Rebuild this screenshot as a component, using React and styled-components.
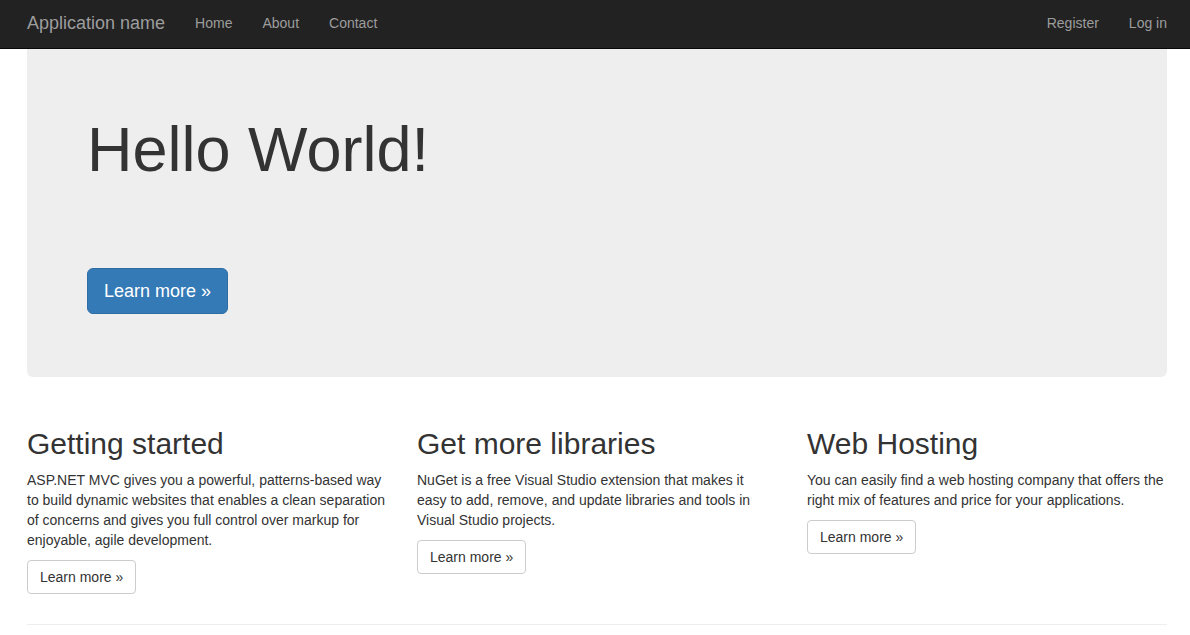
import styled, { createGlobalStyle } from 'styled-components';

const GlobalStyle = createGlobalStyle`
  html, body {
    margin: 0;
    padding: 0;
    background: #fff;
  }
  body {
    font-family: "Liberation Sans", Arial, Helvetica, sans-serif;
    font-size: 14px;
    line-height: 20px;
    color: #333;
  }
  * {
    box-sizing: border-box;
  }
`;

const features = [
  {
    title: 'Getting started',
    text: 'ASP.NET MVC gives you a powerful, patterns-based way to build dynamic websites that enables a clean separation of concerns and gives you full control over markup for enjoyable, agile development.',
  },
  {
    title: 'Get more libraries',
    text: 'NuGet is a free Visual Studio extension that makes it easy to add, remove, and update libraries and tools in Visual Studio projects.',
  },
  {
    title: 'Web Hosting',
    text: 'You can easily find a web hosting company that offers the right mix of features and price for your applications.',
  },
];

const App = () => {
  return (
    <>
      <GlobalStyle />
      <Navbar>
        <Container>
          <NavInner>
            <NavGroup>
              <Brand href="#">Application name</Brand>
              <NavLink href="#">Home</NavLink>
              <NavLink href="#">About</NavLink>
              <NavLink href="#">Contact</NavLink>
            </NavGroup>
            <NavGroup $right>
              <NavLink href="#">Register</NavLink>
              <NavLink href="#">Log in</NavLink>
            </NavGroup>
          </NavInner>
        </Container>
      </Navbar>
      <Container>
        <Jumbotron>
          <HeroTitle>Hello World!</HeroTitle>
          <HeroActions>
            <Button $primary $large href="#">
              Learn more &raquo;
            </Button>
          </HeroActions>
        </Jumbotron>
        <Row>
          {features.map((f) => (
            <Column key={f.title}>
              <ColumnTitle>{f.title}</ColumnTitle>
              <ColumnText>{f.text}</ColumnText>
              <ColumnActions>
                <Button href="#">Learn more &raquo;</Button>
              </ColumnActions>
            </Column>
          ))}
        </Row>
        <Divider />
      </Container>
    </>
  );
};

const Navbar = styled.nav`
  background-color: #222;
  border-bottom: 1px solid #080808;
  height: 49px;
`;

const Container = styled.div`
  padding: 0 23px 0 27px;
`;

const NavInner = styled.div`
  display: flex;
  justify-content: space-between;
  align-items: center;
  height: 46px;
`;

const NavGroup = styled.div`
  display: flex;
  align-items: center;
  margin-right: ${(p) => (p.$right ? '-15px' : '0')};
`;

const Brand = styled.a`
  font-size: 18px;
  line-height: 20px;
  color: #9d9d9d;
  text-decoration: none;
  padding-right: 15px;
`;

const NavLink = styled.a`
  font-size: 14px;
  line-height: 20px;
  color: #9d9d9d;
  text-decoration: none;
  padding: 0 15px;
`;

const Jumbotron = styled.div`
  background-color: #eee;
  border-radius: 0 0 6px 6px;
  padding: 48px 60px;
  margin-bottom: 30px;
`;

const HeroTitle = styled.h1`
  font-size: 63px;
  font-weight: 400;
  line-height: 1.1;
  color: #333;
  margin: 18px 0 84px;
`;

const HeroActions = styled.p`
  margin: 0 0 15px;
`;

const Button = styled.a`
  display: inline-block;
  text-decoration: none;
  border: 1px solid ${(p) => (p.$primary ? '#2e6da4' : '#ccc')};
  background-color: ${(p) => (p.$primary ? '#337ab7' : '#fff')};
  color: ${(p) => (p.$primary ? '#fff' : '#333')};
  font-size: ${(p) => (p.$large ? '18px' : '14px')};
  line-height: ${(p) => (p.$large ? '24px' : '20px')};
  padding: ${(p) => (p.$large ? '10px 16px' : '6px 12px')};
  border-radius: ${(p) => (p.$large ? '6px' : '4px')};
`;

const Row = styled.div`
  display: grid;
  grid-template-columns: repeat(3, 1fr);
  column-gap: 30px;
`;

const Column = styled.div`
  min-width: 0;
`;

const ColumnTitle = styled.h2`
  font-size: 30px;
  font-weight: 400;
  line-height: 33px;
  margin: 20px 0 10px;
  color: #333;
`;

const ColumnText = styled.p`
  margin: 0 0 10px;
`;

const ColumnActions = styled.p`
  margin: 0 0 10px;
`;

const Divider = styled.hr`
  border: 0;
  border-top: 1px solid #eee;
  margin: 20px 0;
`;

export default App;
